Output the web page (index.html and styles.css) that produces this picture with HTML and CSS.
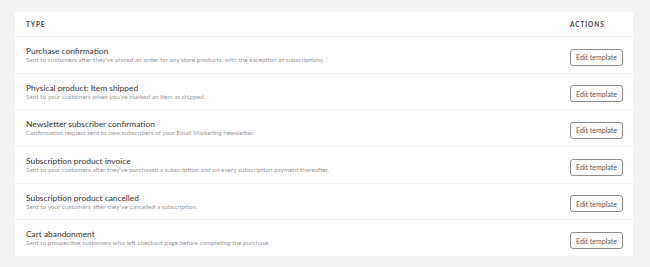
FILE: index.html
```html
<!DOCTYPE html>
<html lang="en">
<head>
    <meta charset="UTF-8">
    <title>Email templates</title>
    <link rel="stylesheet" href="styles.css">
</head>
<body>
    <div class="card">
        <div class="row head">
            <div class="col-type">Type</div>
            <div class="col-actions">Actions</div>
        </div>
        <div class="row">
            <div class="col-type">
                <div class="title">Purchase confirmation</div>
                <div class="desc">Sent to customers after they've placed an order for any store products, with the exception of subscriptions.</div>
            </div>
            <div class="col-actions"><button>Edit template</button></div>
        </div>
        <div class="row">
            <div class="col-type">
                <div class="title">Physical product: Item shipped</div>
                <div class="desc">Sent to your customers when you've marked an item as shipped.</div>
            </div>
            <div class="col-actions"><button>Edit template</button></div>
        </div>
        <div class="row">
            <div class="col-type">
                <div class="title">Newsletter subscriber confirmation</div>
                <div class="desc">Confirmation request sent to new subscribers of your Email Marketing newsletter.</div>
            </div>
            <div class="col-actions"><button>Edit template</button></div>
        </div>
        <div class="row">
            <div class="col-type">
                <div class="title">Subscription product invoice</div>
                <div class="desc">Sent to your customers after they've purchased a subscription and on every subscription payment thereafter.</div>
            </div>
            <div class="col-actions"><button>Edit template</button></div>
        </div>
        <div class="row">
            <div class="col-type">
                <div class="title">Subscription product cancelled</div>
                <div class="desc">Sent to your customers after they've cancelled a subscription.</div>
            </div>
            <div class="col-actions"><button>Edit template</button></div>
        </div>
        <div class="row">
            <div class="col-type">
                <div class="title">Cart abandonment</div>
                <div class="desc">Sent to prospective customers who left checkout page before completing the purchase.</div>
            </div>
            <div class="col-actions"><button>Edit template</button></div>
        </div>
    </div>
</body>
</html>
```

FILE: styles.css
```css
body {
    margin: 0;
    padding: 12px 17px 11px 15px;
    background: #f3f3f3;
    font-family: Lato, "Open Sans", Arial, sans-serif;
}
.card {
    background: white;
}
.row {
    display: flex;
    align-items: center;
    justify-content: space-between;
    height: 36.7px;
    padding: 0 10px 0 11px;
    border-top: 1px solid #f3f3f3;
    box-sizing: border-box;
}
.row.head {
    height: 24px;
    border-top: none;
    font-size: 6.5px;
    font-weight: bold;
    letter-spacing: 0.9px;
    text-transform: uppercase;
    color: #444;
}
.col-actions {
    width: 53px;
}
.title {
    font-size: 8.4px;
    color: #333;
    line-height: 10px;
}
.desc {
    font-size: 6.4px;
    color: #9a9a9a;
    line-height: 8px;
}
button {
    width: 53px;
    height: 17px;
    padding: 0;
    background: white;
    border: 1px solid #8a8a8a;
    border-radius: 3px;
    font-family: Lato, sans-serif;
    font-size: 7px;
    color: #555;
}
```
